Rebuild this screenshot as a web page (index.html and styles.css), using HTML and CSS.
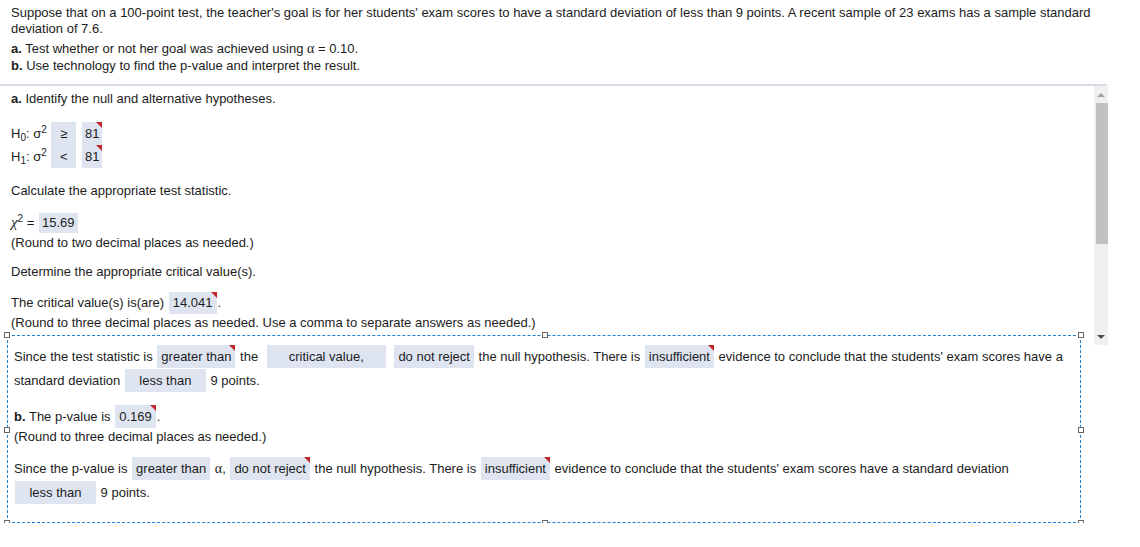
FILE: index.html
```html
<!DOCTYPE html>
<html lang="en">
<head>
  <meta charset="UTF-8">
  <title>Chi-square test</title>
  <link rel="stylesheet" href="styles.css">
</head>
<body>
  <div class="prompt">
    <p>Suppose that on a 100-point test, the teacher's goal is for her students' exam scores to have a standard deviation of less than 9 points. A recent sample of 23 exams has a sample standard deviation of 7.6.</p>
    <p class="parts"><b>a.</b> Test whether or not her goal was achieved using <span class="greek">α</span> = 0.10.<br><b>b.</b> Use technology to find the p-value and interpret the result.</p>
  </div>

  <div class="work">
    <div class="scrollbar">
      <span class="arrow up"></span>
      <span class="thumb"></span>
      <span class="arrow down"></span>
    </div>

    <p class="step first"><b>a.</b> Identify the null and alternative hypotheses.</p>
    <div class="hyp">
      <div class="hyp-row">H<sub>0</sub>: σ<sup>2</sup> <span class="ans sym">≥</span> <span class="ans mark">81</span></div>
      <div class="hyp-row">H<sub>1</sub>: σ<sup>2</sup> <span class="ans sym">&lt;</span> <span class="ans mark">81</span></div>
    </div>

    <p class="step calc">Calculate the appropriate test statistic.</p>
    <p class="line stat"><i class="chi">χ</i><sup>2</sup> = <span class="ans small">15.69</span></p>
    <p class="line">(Round to two decimal places as needed.)</p>

    <p class="step det">Determine the appropriate critical value(s).</p>
    <p class="line crit">The critical value(s) is(are) <span class="ans mark">14.041</span>.</p>
    <p class="line note">(Round to three decimal places as needed. Use a comma to separate answers as needed.)</p>

    <div class="focus">
      <span class="handle tl"></span><span class="handle tm"></span><span class="handle tr"></span>
      <span class="handle ml"></span><span class="handle mr"></span>
      <span class="handle bl"></span><span class="handle bm"></span><span class="handle br"></span>

      <p class="answer">Since the test statistic is <span class="ans mark">greater than</span> the <span class="ans wide">critical value,</span> <span class="ans">do not reject</span> the null hypothesis. There is <span class="ans mark">insufficient</span> evidence to conclude that the students' exam scores have a standard deviation <span class="ans less">less than</span> 9 points.</p>

      <p class="answer pval"><b>b.</b> The p-value is <span class="ans mark">0.169</span>.</p>
      <p class="line round">(Round to three decimal places as needed.)</p>

      <p class="answer last">Since the p-value is <span class="ans">greater than</span> <span class="greek">α</span>, <span class="ans mark">do not reject</span> the null hypothesis. There is <span class="ans mark">insufficient</span> evidence to conclude that the students' exam scores have a standard deviation <span class="ans less">less than</span> 9 points.</p>
    </div>
  </div>
</body>
</html>
```

FILE: styles.css
```css
body { margin: 0; font-family: "Liberation Sans", Arial, sans-serif; font-size: 13px; color: #1c1c1c; background: #fff; }
p { margin: 0; }
b { font-weight: bold; }
sub, sup { font-size: 10px; line-height: 0; }
sub { vertical-align: -3px; }
sup { vertical-align: 5px; }
.greek { font-family: "Liberation Serif", serif; font-size: 14px; }
.chi { font-family: "Liberation Serif", serif; font-size: 15px; }

.prompt { padding: 5px 6px 0 11px; height: 79px; border-bottom: 2px solid #d6dbe5; width: 1090px; }
.prompt p { line-height: 16px; }
.prompt .parts { margin-top: 3px; line-height: 17px; }

.work { position: relative; padding: 3px 0 0 11px; }
.step, .line { line-height: 20px; }

.hyp { margin-top: 13px; }
.hyp-row { height: 23px; line-height: 23px; }
.hyp-row .sym { width: 25px; padding: 0; text-align: center; margin-left: 1px; }
.hyp-row .mark { padding: 0 3px; margin-left: 1px; }

.step.calc { margin-top: 13px; }
.line.stat { margin-top: 11px; }
.step.det { margin-top: 9px; }
.line.crit { margin-top: 10px; line-height: 22px; height: 22px; }
.line.crit .ans { height: 22px; line-height: 22px; }
.line.note { margin-top: -1px; }

.ans { display: inline-block; position: relative; background: #dfe5f0; height: 23px; line-height: 23px; padding: 0 4px; vertical-align: baseline; margin: 0 1px; }
.ans.small { height: 20px; line-height: 20px; padding: 0 3px; }
.ans.mark::after { content: ""; position: absolute; top: 0; right: 0; border-top: 6px solid #c0272d; border-left: 6px solid transparent; }
.ans.wide { box-sizing: border-box; width: 119px; text-align: center; margin: 0 4px 0 5px; }
.ans.less { box-sizing: border-box; width: 81px; text-align: center; }

.focus { position: relative; margin: 2px 0 0 -4px; width: 1074px; box-sizing: border-box; border: 1px dashed #1f80d6; padding: 9px 6px 17px 6px; }
.answer { line-height: 24px; }
.answer.pval { margin-top: 12px; }
.line.round { margin-top: -2px; }
.answer.last { margin-top: 10px; }

.handle { position: absolute; width: 4px; height: 4px; background: #fff; border: 1px solid #666; }
.handle.tl { top: -4px; left: -4px; }
.handle.tm { top: -4px; left: 534px; }
.handle.tr { top: -4px; right: -4px; }
.handle.ml { top: 91px; left: -4px; }
.handle.mr { top: 91px; right: -4px; }
.handle.bl { bottom: -4px; left: -4px; }
.handle.bm { bottom: -4px; left: 534px; }
.handle.br { bottom: -4px; right: -4px; }

.scrollbar { position: absolute; top: 0; left: 1094px; width: 14px; height: 259px; background: #f0f0f0; }
.scrollbar .thumb { position: absolute; left: 2px; right: 0; top: 17px; height: 141px; background: #c1c1c1; }
.scrollbar .arrow { position: absolute; left: 3px; width: 0; height: 0; border-left: 4px solid transparent; border-right: 4px solid transparent; }
.scrollbar .up { top: 7px; border-bottom: 4px solid #a3a3a3; }
.scrollbar .down { bottom: 6px; border-top: 4px solid #505050; }
```
